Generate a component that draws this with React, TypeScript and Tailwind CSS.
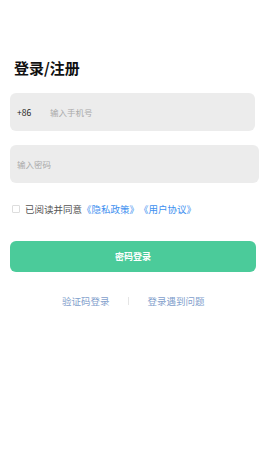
export default function App() {
  return (
    <div className="w-[270px] h-[475px] bg-white font-['Noto_Sans_CJK_SC','Liberation_Sans',sans-serif] pt-[57px] [text-spacing-trim:space-all]">
      <h1 className="pl-[14px] text-[15px] font-bold leading-[22px] text-[#111]">登录/注册</h1>

      <div className="mt-[14px] ml-[10px] w-[245px] h-[38px] rounded-[6px] bg-[#ececec] flex items-center">
        <span className="pl-[7px] w-[40px] text-[8.5px] text-[#222]">+86</span>
        <span className="text-[8.5px] text-[#aaa]">输入手机号</span>
      </div>

      <div className="mt-[14px] ml-[10px] w-[249px] h-[38px] rounded-[6px] bg-[#ececec] flex items-center">
        <span className="pl-[7px] text-[8.5px] text-[#aaa]">输入密码</span>
      </div>

      <div className="mt-[19px] ml-[12px] flex items-center h-[14px]">
        <span className="w-[8px] h-[8px] border border-[#ddd] rounded-[1px]"></span>
        <span className="ml-[5px] text-[9.5px] text-[#555]">已阅读并同意</span>
        <span className="text-[9.5px] text-[#3d8ff0]">《隐私政策》《用户协议》</span>
      </div>

      <div className="mt-[25px] ml-[10px] w-[246px] h-[31px] rounded-[6px] bg-[#4bcb9a] flex items-center justify-center">
        <span className="text-[9px] font-bold text-white">密码登录</span>
      </div>

      <div className="mt-[21px] flex items-center h-[16px]">
        <span className="ml-[62px] text-[9.5px] text-[#7fa0cc]">验证码登录</span>
        <span className="ml-[18px] w-px h-[8px] bg-[#e5e5e5]"></span>
        <span className="ml-[19px] text-[9.5px] text-[#7fa0cc]">登录遇到问题</span>
      </div>
    </div>
  );
}
